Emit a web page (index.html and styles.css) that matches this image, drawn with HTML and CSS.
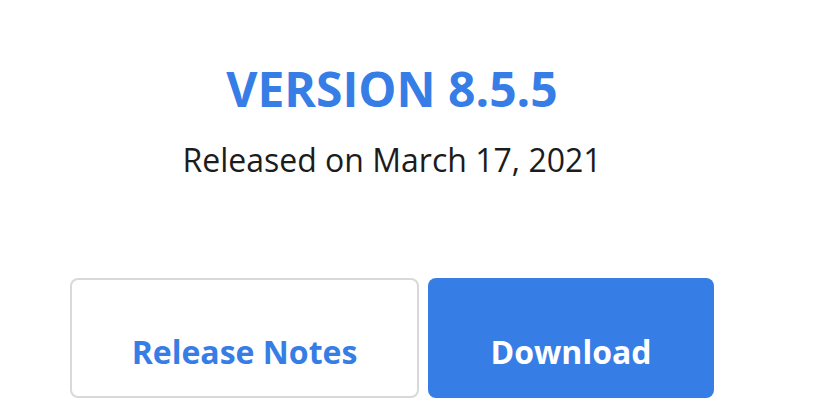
FILE: index.html
```html
<!DOCTYPE html>
<html>
<head>
<meta charset="utf-8">
<link rel="stylesheet" href="styles.css">
</head>
<body>
<div class="wrap">
  <h1 class="version">VERSION 8.5.5</h1>
  <p class="released">Released on March 17, 2021</p>
  <div class="actions">
    <a class="btn btn-outline">Release Notes</a>
    <a class="btn btn-primary">Download</a>
  </div>
</div>
</body>
</html>
```
FILE: styles.css
```css
html, body {
  margin: 0;
  padding: 0;
  background: #ffffff;
}
body {
  font-family: "Open Sans", "Liberation Sans", sans-serif;
}
.wrap {
  width: 784px;
  display: flex;
  flex-direction: column;
  align-items: center;
  padding-top: 56px;
}
.version {
  margin: 0;
  font-size: 48px;
  line-height: 65px;
  font-weight: 700;
  color: #377de6;
}
.released {
  margin: 17px 0 0;
  font-size: 32px;
  line-height: 44px;
  font-weight: 400;
  color: #1c1c1c;
}
.actions {
  margin-top: 96px;
  display: flex;
  gap: 9px;
}
.btn {
  box-sizing: border-box;
  height: 120px;
  font-size: 32px;
  line-height: 44px;
  font-weight: 700;
  text-align: center;
  border-radius: 8px;
}
.btn-outline {
  width: 349px;
  padding-top: 50px;
  border: 2px solid #d9d9d9;
  color: #377de6;
  background: #fff;
}
.btn-primary {
  width: 286px;
  padding-top: 52px;
  background: #377de6;
  color: #ffffff;
}
```
